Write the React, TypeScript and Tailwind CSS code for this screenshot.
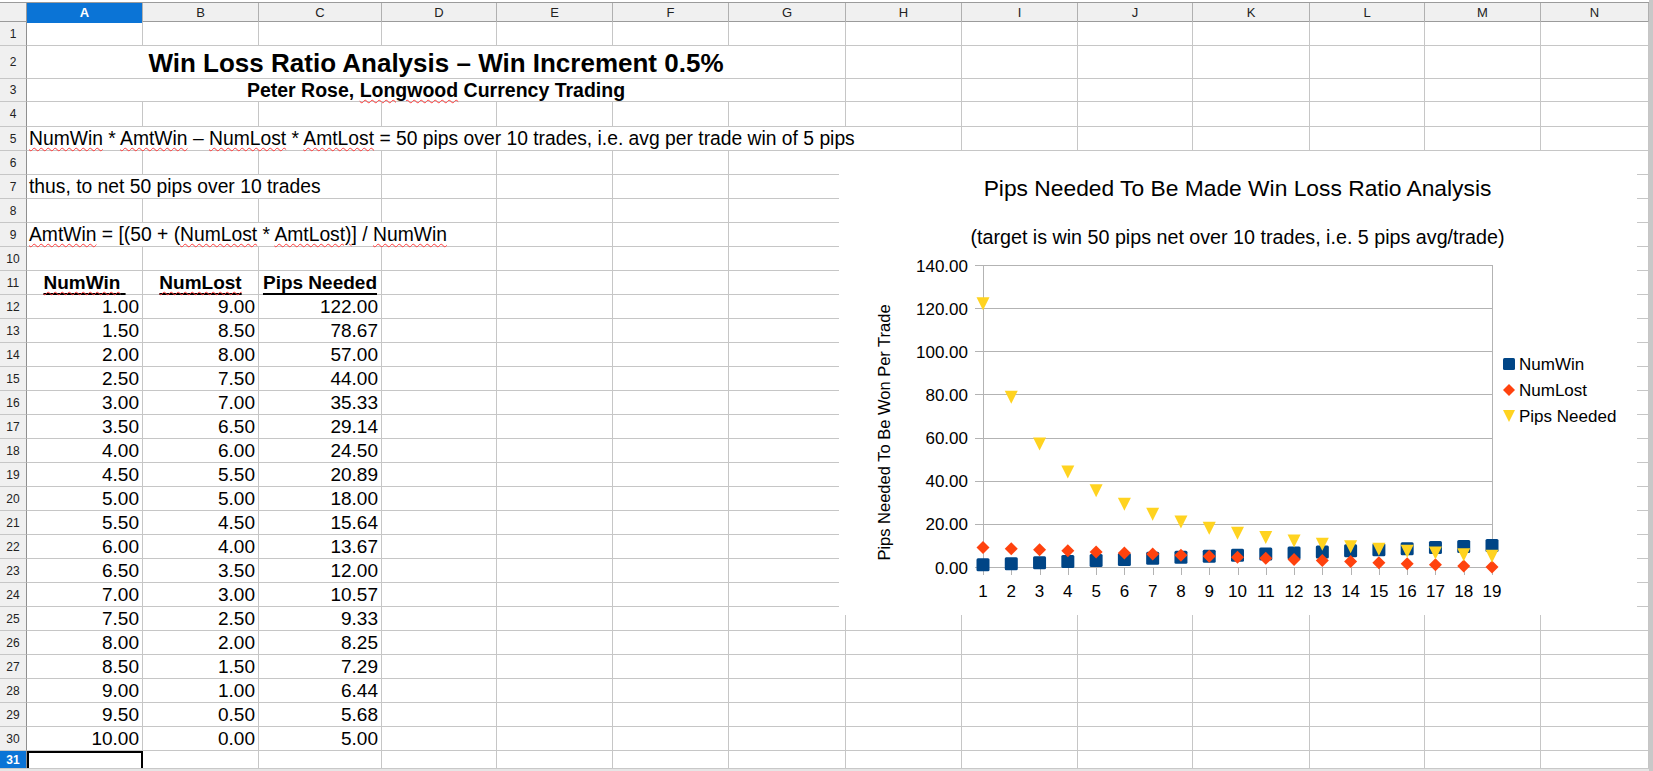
import React from "react";

const GRID =
  "grid grid-cols-[27px_116px_116px_123px_115px_116px_116px_117px_116px_116px_115px_117px_115px_116px_108px]";
const LETTERS = "ABCDEFGHIJKLMN".split("");

const SPAN: Record<number, string> = {
  1: "",
  3: "col-span-3",
  4: "col-span-4",
  7: "col-span-7",
  8: "col-span-8",
};

const ROW_H: Record<number, string> = {
  1: "h-[24px]",
  2: "h-[33px]",
  3: "h-[23px]",
  4: "h-[25px]",
  31: "h-[17px]",
};

type Seg = {
  span?: number;
  align?: "left" | "center" | "right";
  content?: React.ReactNode;
  selected?: boolean;
};

// red spell-check squiggle
function W({ children }: { children: React.ReactNode }) {
  return (
    <span className="underline decoration-wavy decoration-[#ff3b3b] decoration-1 underline-offset-[2px]">
      {children}
    </span>
  );
}

function Head({ children }: { children: React.ReactNode }) {
  return (
    <span className="font-bold whitespace-pre underline decoration-black decoration-2 underline-offset-[4px]">
      {children}
    </span>
  );
}

const win = Array.from({ length: 19 }, (_, i) => 1 + i * 0.5);
const lost = win.map((w) => 10 - w);
const pips = [
  122, 78.67, 57, 44, 35.33, 29.14, 24.5, 20.89, 18, 15.64, 13.67, 12, 10.57, 9.33, 8.25, 7.29,
  6.44, 5.68, 5,
];

function buildRows(): Record<number, Seg[]> {
  const rows: Record<number, Seg[]> = {
    2: [
      {
        span: 7,
        align: "center",
        content: (
          <span className="text-[26px] font-bold leading-[30px]">
            Win Loss Ratio Analysis – Win Increment 0.5%
          </span>
        ),
      },
    ],
    3: [
      {
        span: 7,
        align: "center",
        content: (
          <span className="text-[19.5px] font-bold">
            Peter Rose, <W>Longwood</W> Currency Trading
          </span>
        ),
      },
    ],
    5: [
      {
        span: 8,
        content: (
          <span className="text-[19.3px]">
            <W>NumWin</W> * <W>AmtWin</W> – <W>NumLost</W> * <W>AmtLost</W> = 50 pips over 10
            trades, i.e. avg per trade win of 5 pips
          </span>
        ),
      },
    ],
    7: [{ span: 3, content: <span className="text-[19.3px]">thus, to net 50 pips over 10 trades</span> }],
    9: [
      {
        span: 4,
        content: (
          <span className="text-[19.3px]">
            <W>AmtWin</W> = [(50 + (<W>NumLost</W> * <W>AmtLost)</W>] / <W>NumWin</W>
          </span>
        ),
      },
    ],
    11: [
      { align: "center", content: <Head><W>NumWin</W> </Head> },
      { align: "center", content: <Head><W>NumLost</W></Head> },
      { align: "center", content: <Head>Pips Needed</Head> },
    ],
    31: [{ selected: true }],
  };
  win.forEach((w, i) => {
    rows[12 + i] = [
      { align: "right", content: w.toFixed(2) },
      { align: "right", content: lost[i].toFixed(2) },
      { align: "right", content: pips[i].toFixed(2) },
    ];
  });
  return rows;
}

function SheetRow({ n, segs }: { n: number; segs: Seg[] }) {
  const cells: React.ReactNode[] = [];
  let used = 0;
  segs.forEach((s, i) => {
    const span = s.span ?? 1;
    used += span;
    const justify =
      s.align === "center" ? "justify-center" : s.align === "right" ? "justify-end pr-[3px]" : "justify-start pl-[2px]";
    cells.push(
      <div
        key={"s" + i}
        className={`${SPAN[span]} flex items-end ${justify} whitespace-nowrap text-[19px] leading-[22px] text-black ${
          s.selected ? "border-2 border-b-0 border-black" : "border-r border-b border-[#c6c6c6]"
        }`}
      >
        {s.content}
      </div>
    );
  });
  for (let c = used; c < 14; c++) {
    cells.push(<div key={"e" + c} className="border-r border-b border-[#c6c6c6]" />);
  }
  const sel = n === 31;
  return (
    <div className={`${GRID} ${ROW_H[n] ?? "h-[24px]"}`}>
      <div
        className={`flex items-center justify-center text-[12px] border-r border-r-[#8f8f8f] border-b border-b-[#c6c6c6] ${
          sel ? "bg-[#0b74d6] text-white font-bold" : "bg-[#f0f0f0] text-[#222]"
        }`}
      >
        {n}
      </div>
      {cells}
    </div>
  );
}

// chart geometry, relative to the chart box
const PL = 144;
const PR = 653;
const PT = 114;
const PB = 416;
const X = (i: number) => PL + (i * (PR - PL)) / 18;
const Y = (v: number) => PB - (v * (PB - PT)) / 140;
const px = (v: number) => Math.round(v) + 0.5;

function Square({ x, y, s = 6.5 }: { x: number; y: number; s?: number }) {
  return <rect x={x - s} y={y - s} width={s * 2} height={s * 2} rx={1.5} fill="#004586" />;
}
function Diamond({ x, y, s = 6.5 }: { x: number; y: number; s?: number }) {
  return <polygon points={`${x},${y - s} ${x + s},${y} ${x},${y + s} ${x - s},${y}`} fill="#ff420e" />;
}
function Tri({ x, y, s = 6.5 }: { x: number; y: number; s?: number }) {
  return <polygon points={`${x - s},${y - s} ${x + s},${y - s} ${x},${y + s}`} fill="#ffd320" />;
}

function Chart() {
  const ticks = [0, 20, 40, 60, 80, 100, 120, 140];
  return (
    <div className="absolute left-[839px] top-[151px] w-[798px] h-[464px] bg-white">
      <svg width={798} height={464} className="block font-['Liberation_Sans',Arial,sans-serif]">
        <text x={398.5} y={45} textAnchor="middle" fontSize={22.8} fill="#000">
          Pips Needed To Be Made Win Loss Ratio Analysis
        </text>
        <text x={398.5} y={93} textAnchor="middle" fontSize={19.7} fill="#000">
          (target is win 50 pips net over 10 trades, i.e. 5 pips avg/trade)
        </text>

        {ticks.map((v) => (
          <g key={v}>
            <line x1={PL - 8} x2={PR} y1={px(Y(v))} y2={px(Y(v))} stroke="#b3b3b3" />
            <text x={129} y={Y(v) + 6.5} textAnchor="end" fontSize={17} fill="#000">
              {v.toFixed(2)}
            </text>
          </g>
        ))}
        <line x1={px(PL)} x2={px(PL)} y1={PT} y2={PB + 8} stroke="#b3b3b3" />
        <line x1={px(PR)} x2={px(PR)} y1={PT} y2={PB + 8} stroke="#b3b3b3" />
        {win.map((_, i) => (
          <g key={i}>
            <line x1={px(X(i))} x2={px(X(i))} y1={PB} y2={PB + 8} stroke="#b3b3b3" />
            <text x={X(i)} y={446} textAnchor="middle" fontSize={17} fill="#000">
              {i + 1}
            </text>
          </g>
        ))}

        <text transform="translate(51,281.5) rotate(-90)" textAnchor="middle" fontSize={16.5} fill="#000">
          Pips Needed To Be Won Per Trade
        </text>

        {win.map((v, i) => (
          <Square key={"w" + i} x={X(i)} y={Y(v)} />
        ))}
        {lost.map((v, i) => (
          <Diamond key={"l" + i} x={X(i)} y={Y(v)} />
        ))}
        {pips.map((v, i) => (
          <Tri key={"p" + i} x={X(i)} y={Y(v)} />
        ))}

        <Square x={670} y={213} s={6} />
        <text x={680} y={219} fontSize={17} fill="#000">
          NumWin
        </text>
        <Diamond x={670} y={239} s={6} />
        <text x={680} y={245} fontSize={17} fill="#000">
          NumLost
        </text>
        <Tri x={670} y={265} s={6} />
        <text x={680} y={271} fontSize={17} fill="#000">
          Pips Needed
        </text>
      </svg>
    </div>
  );
}

export default function App() {
  const rows = buildRows();
  return (
    <div className="relative w-[1653px] h-[771px] overflow-hidden bg-white flex font-['Liberation_Sans',Arial,sans-serif]">
      <div className="w-[1649px] flex flex-col">
        <div className="h-[2px] bg-white" />
        <div className={`${GRID} h-[20px] border-y border-[#9b9b9b] bg-[#f0f0f0]`}>
          <div className="border-r border-[#9b9b9b]" />
          {LETTERS.map((l) => (
            <div
              key={l}
              className={`flex items-center justify-center text-[13px] border-r border-[#b0b0b0] ${
                l === "A" ? "bg-[#0b74d6] text-white font-bold" : "text-[#222]"
              }`}
            >
              {l}
            </div>
          ))}
        </div>
        {Array.from({ length: 31 }, (_, i) => i + 1).map((n) => (
          <SheetRow key={n} n={n} segs={rows[n] ?? []} />
        ))}
        <div className="h-[3px] bg-[#e6e6e6] border-t border-[#c8c8c8]" />
      </div>
      <div className="w-[4px] bg-[#c8c8c8]" />
      <Chart />
    </div>
  );
}
